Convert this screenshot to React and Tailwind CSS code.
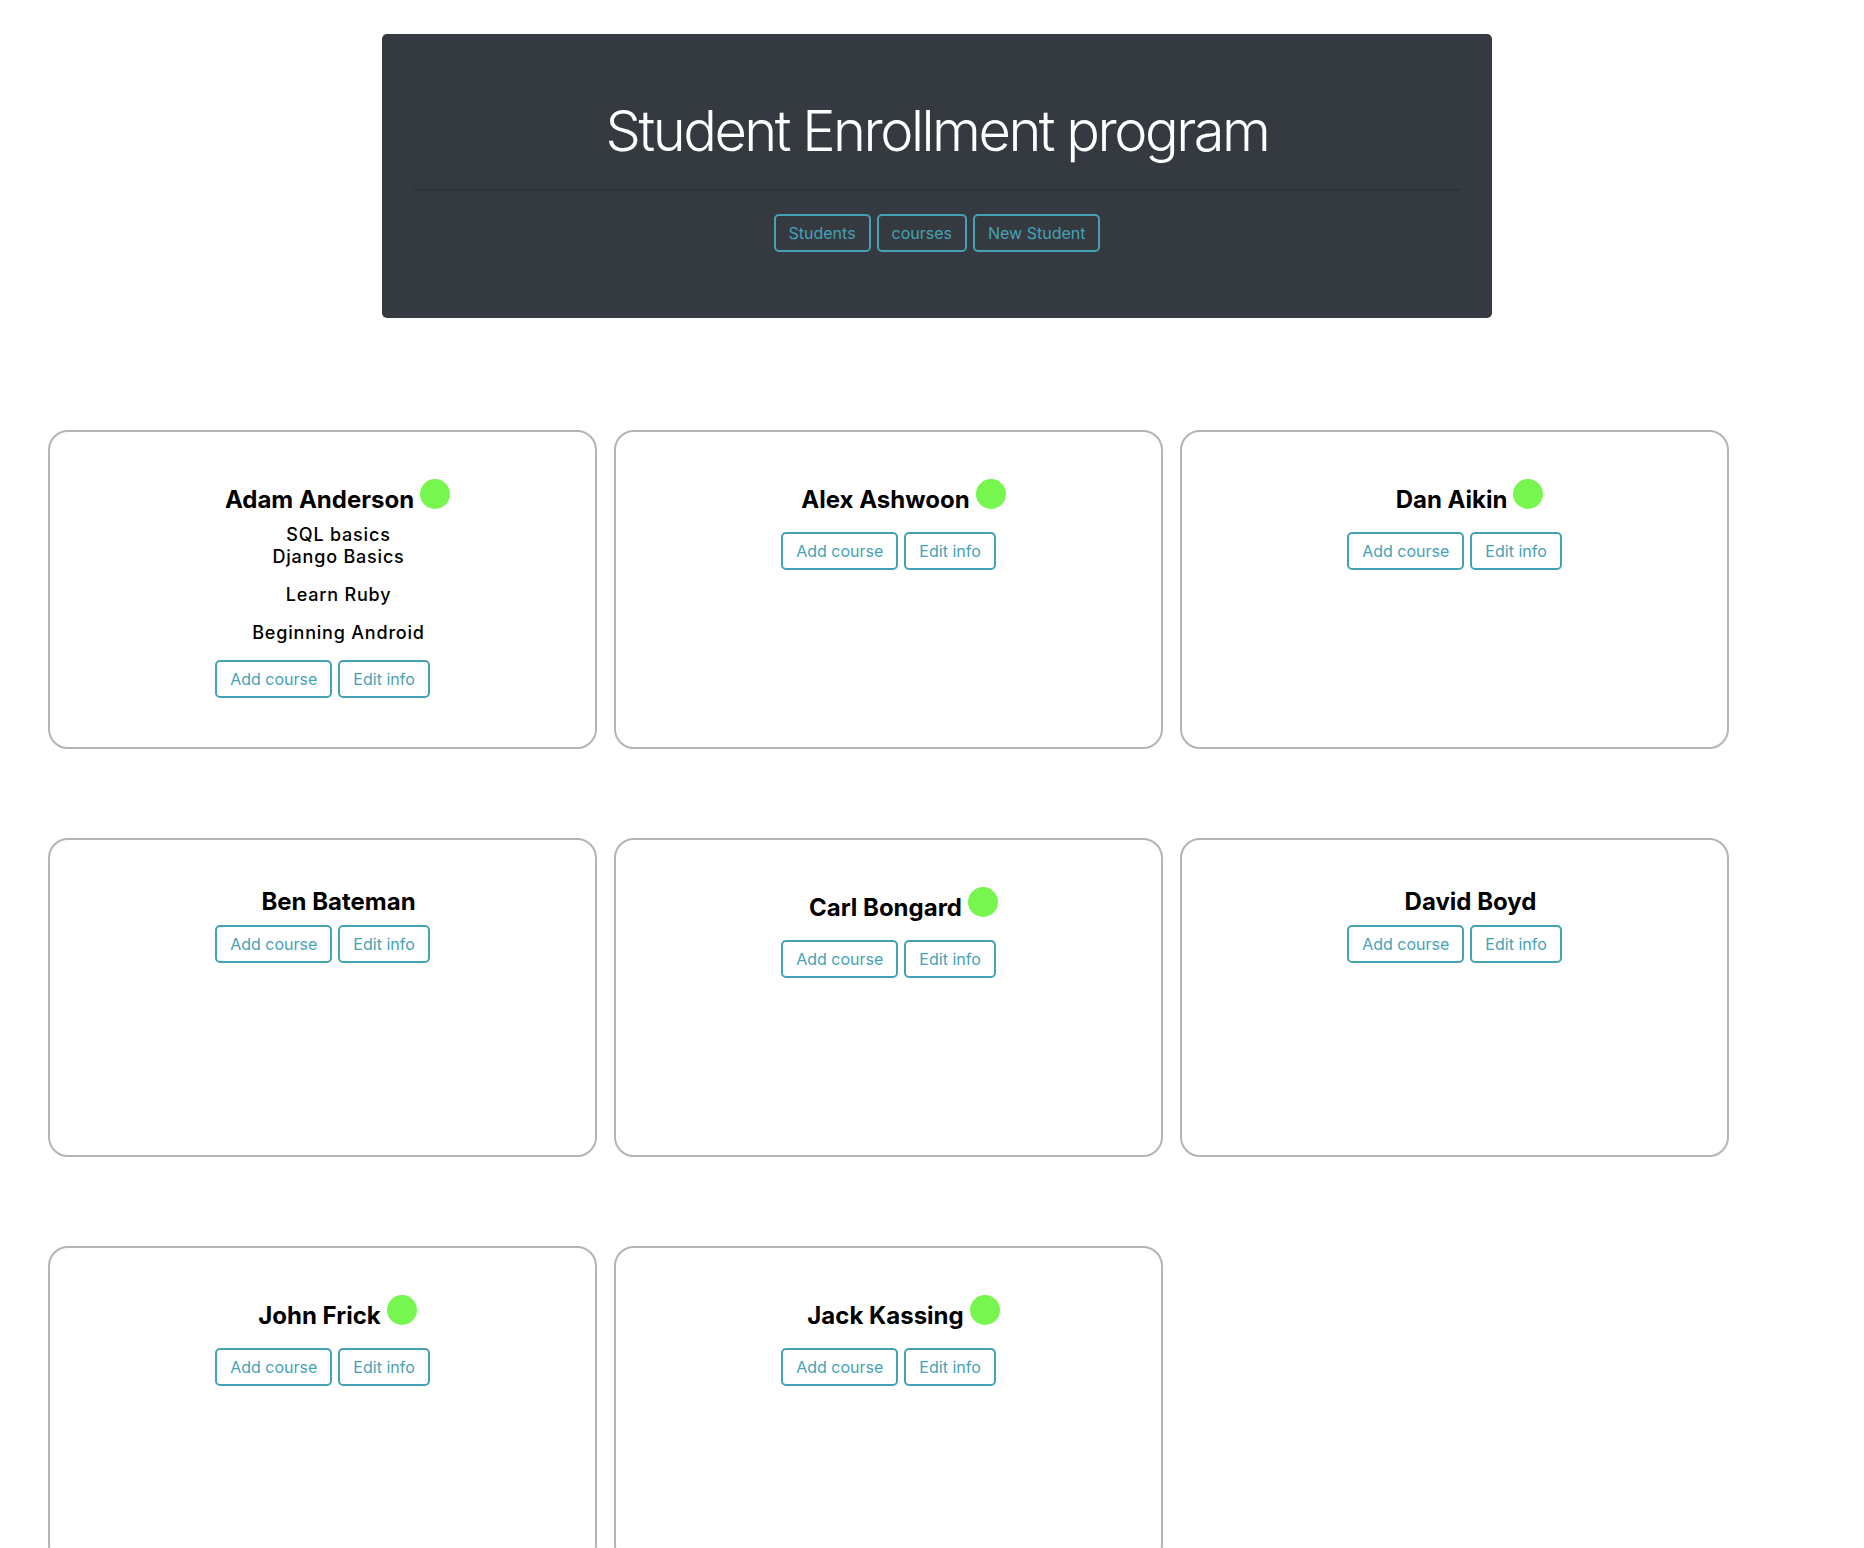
import React from "react";

const students = [
  {
    name: "Adam Anderson",
    active: true,
    courses: ["SQL basics", "Django Basics", "Learn Ruby", "Beginning Android"],
  },
  { name: "Alex Ashwoon", active: true, courses: [] },
  { name: "Dan Aikin", active: true, courses: [] },
  { name: "Ben Bateman", active: false, courses: [] },
  { name: "Carl Bongard", active: true, courses: [] },
  { name: "David Boyd", active: false, courses: [] },
  { name: "John Frick", active: true, courses: [] },
  { name: "Jack Kassing", active: true, courses: [] },
];

const OutlineButton = ({ children }) => (
  <button className="h-[38px] px-[13px] border-2 border-[#45a2b6] rounded-[5px] text-[16px] leading-[20px] tracking-[0px] text-[#45a2b6] bg-transparent hover:bg-[#45a2b6] hover:text-white transition">
    {children}
  </button>
);

const StudentCard = ({ student }) => {
  const hasCourses = student.courses.length > 0;
  const [first, ...rest] = student.courses;

  return (
    <div className="h-[319px] border-2 border-[#b4b4b4] rounded-[20px] pt-[47px] text-center bg-white">
      <div
        className={
          student.active
            ? "h-[45px] pt-[6px]" + (hasCourses ? "" : " mb-[8px]")
            : "h-[29px] mb-[9px] pl-[32px]"
        }
      >
        <h4 className="text-[24px] leading-[29px] font-bold text-black">
          {student.active ? (
            <span className="relative pr-[6px]">
              {student.name}
              <span className="absolute left-full top-[-6px] w-[30px] h-[30px] rounded-full bg-[#77f650]" />
            </span>
          ) : (
            student.name
          )}
        </h4>
      </div>

      {hasCourses && (
        <div className="pl-[32px] text-[18px] leading-[22px] font-medium tracking-[0.8px] text-black">
          <div>{first}</div>
          {rest.map((c) => (
            <p key={c} className="mb-[16px]">
              {c}
            </p>
          ))}
        </div>
      )}

      <div className="flex justify-center gap-[6px]">
        <OutlineButton>Add course</OutlineButton>
        <OutlineButton>Edit info</OutlineButton>
      </div>
    </div>
  );
};

export default function App() {
  return (
    <div className="min-h-screen bg-white font-['Inter',sans-serif] pt-[34px] pb-[40px]">
      <div className="ml-[382px] w-[1110px] bg-[#343a40] rounded-[5px] px-[32px] pt-[64px] pb-[66px] text-center">
        <h1 className="text-[56px] leading-[67px] font-light tracking-[-2.5px] text-white">
          Student Enrollment program
        </h1>
        <hr className="mt-[24px] mb-[23px] border-0 border-t-2 border-[#2d3237]" />
        <div className="flex justify-center gap-[6px]">
          <OutlineButton>Students</OutlineButton>
          <OutlineButton>courses</OutlineButton>
          <OutlineButton>New Student</OutlineButton>
        </div>
      </div>

      <div className="mt-[112px] pl-[48px] grid grid-cols-[549px_549px_549px] gap-x-[17px] gap-y-[89px]">
        {students.map((s) => (
          <StudentCard key={s.name} student={s} />
        ))}
      </div>
    </div>
  );
}
